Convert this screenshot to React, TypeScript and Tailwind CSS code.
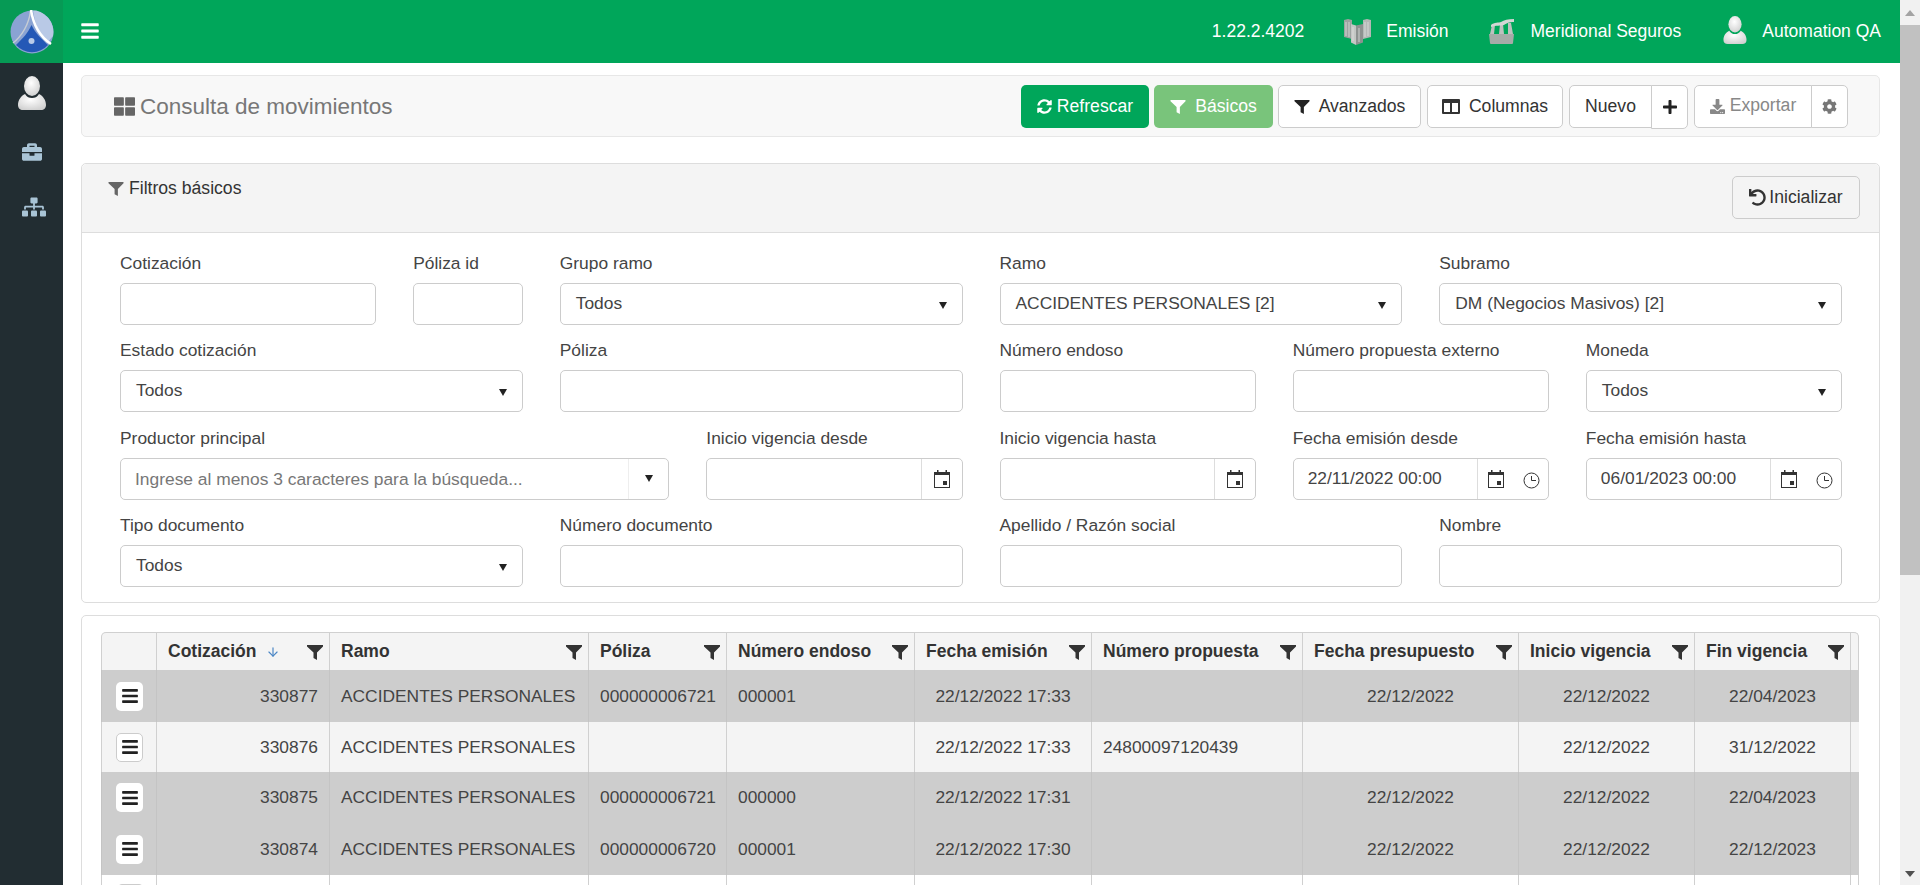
import { ArrowDown } from 'lucide-react'
import { FaBriefcase, FaSitemap, FaThLarge, FaSyncAlt, FaBars, FaUndo, FaDownload, FaCog, FaPlus } from 'react-icons/fa'

type Field = {
  label: string
  span: string
  kind?: 'text' | 'select' | 'search' | 'date' | 'datetime'
  value?: string
}

const rows: Field[][] = [
  [
    { label: 'Cotización', span: 'col-span-2' },
    { label: 'Póliza id', span: 'col-span-1' },
    { label: 'Grupo ramo', span: 'col-span-3', kind: 'select', value: 'Todos' },
    { label: 'Ramo', span: 'col-span-3', kind: 'select', value: 'ACCIDENTES PERSONALES [2]' },
    { label: 'Subramo', span: 'col-span-3', kind: 'select', value: 'DM (Negocios Masivos) [2]' },
  ],
  [
    { label: 'Estado cotización', span: 'col-span-3', kind: 'select', value: 'Todos' },
    { label: 'Póliza', span: 'col-span-3' },
    { label: 'Número endoso', span: 'col-span-2' },
    { label: 'Número propuesta externo', span: 'col-span-2' },
    { label: 'Moneda', span: 'col-span-2', kind: 'select', value: 'Todos' },
  ],
  [
    { label: 'Productor principal', span: 'col-span-4', kind: 'search' },
    { label: 'Inicio vigencia desde', span: 'col-span-2', kind: 'date' },
    { label: 'Inicio vigencia hasta', span: 'col-span-2', kind: 'date' },
    { label: 'Fecha emisión desde', span: 'col-span-2', kind: 'datetime', value: '22/11/2022 00:00' },
    { label: 'Fecha emisión hasta', span: 'col-span-2', kind: 'datetime', value: '06/01/2023 00:00' },
  ],
  [
    { label: 'Tipo documento', span: 'col-span-3', kind: 'select', value: 'Todos' },
    { label: 'Número documento', span: 'col-span-3' },
    { label: 'Apellido / Razón social', span: 'col-span-3' },
    { label: 'Nombre', span: 'col-span-3' },
  ],
]

const columns = [
  { title: 'Cotización', width: 'w-[173px]', sort: true },
  { title: 'Ramo', width: 'w-[259px]' },
  { title: 'Póliza', width: 'w-[138px]' },
  { title: 'Número endoso', width: 'w-[188px]' },
  { title: 'Fecha emisión', width: 'w-[177px]' },
  { title: 'Número propuesta', width: 'w-[211px]' },
  { title: 'Fecha presupuesto', width: 'w-[216px]' },
  { title: 'Inicio vigencia', width: 'w-[176px]' },
  { title: 'Fin vigencia', width: 'w-[156px]' },
]

const data = [
  { id: '330877', poliza: '000000006721', endoso: '000001', emision: '22/12/2022 17:33', propuesta: '', presupuesto: '22/12/2022', inicio: '22/12/2022', fin: '22/04/2023', bg: 'bg-[#cdcdcd]', h: 'h-[52px]', border: 'border-[#c4c4c4]' },
  { id: '330876', poliza: '', endoso: '', emision: '22/12/2022 17:33', propuesta: '24800097120439', presupuesto: '', inicio: '22/12/2022', fin: '31/12/2022', bg: 'bg-[#f4f4f4]', h: 'h-[50px]', border: 'border-[#d0d0d0]' },
  { id: '330875', poliza: '000000006721', endoso: '000000', emision: '22/12/2022 17:31', propuesta: '', presupuesto: '22/12/2022', inicio: '22/12/2022', fin: '22/04/2023', bg: 'bg-[#cdcdcd]', h: 'h-[51px]', border: 'border-[#c4c4c4]' },
  { id: '330874', poliza: '000000006720', endoso: '000001', emision: '22/12/2022 17:30', propuesta: '', presupuesto: '22/12/2022', inicio: '22/12/2022', fin: '22/12/2023', bg: 'bg-[#cdcdcd]', h: 'h-[52px]', border: 'border-[#c4c4c4]' },
]

function Logo() {
  return (
    <svg viewBox="0 0 44 44" className="w-[44px] h-[44px]">
      <circle cx="22" cy="22" r="21.500" fill="#8aa3d3" />
      <path d="M21 0a22 22 0 0 1 22 26L37 33C30 26 25 15 23 0z" fill="#b9c9e6" />
      <path d="M21.500 15C18 23 13 28 6 35a21.500 21.500 0 0 0 32 0C31 28 25 23 21.500 15z" fill="#2458b6" />
      <path d="M20.500 1C19 14 12 26 3 33" fill="none" stroke="#c6ccd4" strokeWidth="1.500" />
      <path d="M21 0C23 13 29 26 41 34" fill="none" stroke="#fff" strokeWidth="2.500" />
      <circle cx="21.500" cy="31" r="3" fill="#b9cbe9" />
    </svg>
  )
}

function UserFigure({ className, id }: { className: string; id: string }) {
  return (
    <svg viewBox="0 0 28 34" className={className}>
      <defs>
        <radialGradient id={id} cx="45%" cy="35%" r="70%">
          <stop offset="0%" stopColor="#ffffff" />
          <stop offset="100%" stopColor="#cfcfcf" />
        </radialGradient>
      </defs>
      <ellipse cx="14" cy="10" rx="8" ry="10" fill={`url(#${id})`} />
      <path d="M7 18c-4 2-7 6-7 11 0 3 2 5 5 5h18c3 0 5-2 5-5 0-5-3-9-7-11-2 3-4 4-7 4s-5-1-7-4z" fill={`url(#${id})`} />
    </svg>
  )
}

function BuildingsIcon() {
  return (
    <svg viewBox="0 0 27 27" className="w-[27px] h-[27px]">
      <path d="M0 2l4-1 4 1v19l-8-2z" fill="#9da3a1" />
      <path d="M19 2l4-1 4 1v17l-8 2z" fill="#b4b8b6" />
      <path d="M7 6l5 1.500V27l-5-2.500z" fill="#c3c6c4" />
      <path d="M12 7.500L19 6v18.500L12 27z" fill="#8d9290" />
      <path d="M2 4v14M5 4v15M21 4v15M24 4v14M9 9v14M15 10v14" stroke="#dfe2e0" strokeWidth="0.800" />
    </svg>
  )
}

function FactoryIcon() {
  return (
    <svg viewBox="0 0 27 26" className="w-[27px] h-[26px]">
      <path d="M1 16h25l-1 9a1 1 0 0 1-1 1H3a1 1 0 0 1-1-1z" fill="#a7aba8" />
      <path d="M2 16l2-9h3l-1 9zM11 16l1-10h3l1 10zM20 16l0-11h3l2 11z" fill="#bdc1be" />
      <path d="M3 7c3-3 8-2 10-3 3-2 7-3 13-3v3c-5 0-7 1-10 3-3 1-8 0-13 2z" fill="#d3d6d4" />
    </svg>
  )
}

function FilterIcon({ className }: { className: string }) {
  return (
    <svg viewBox="0 0 16 16" className={className}>
      <path d="M0 1h16v1.500L10 8.500V16L6.500 14V8.500L0 2.500z" fill="currentColor" />
    </svg>
  )
}

function ColumnsIcon() {
  return (
    <svg viewBox="0 0 18 15" className="w-[18px] h-[15px]">
      <path d="M1 0h16a1 1 0 0 1 1 1v13a1 1 0 0 1-1 1H1a1 1 0 0 1-1-1V1a1 1 0 0 1 1-1zm1 4v9h6V4zm8 0v9h6V4z" fill="currentColor" fillRule="evenodd" />
    </svg>
  )
}

function CalendarIcon() {
  return (
    <svg viewBox="0 0 18 18" className="w-[18px] h-[18px]">
      <path d="M4 0h1.500v2h7V0H14v2h3v16H1V2h3zm-2 5v12h14V5z" fill="#333" fillRule="evenodd" />
      <path d="M10 11h4v4h-4z" fill="#333" />
    </svg>
  )
}

function ClockIcon() {
  return (
    <svg viewBox="0 0 17 17" className="w-[17px] h-[17px]">
      <circle cx="8.500" cy="8.500" r="7.500" fill="none" stroke="#333" strokeWidth="1" />
      <path d="M8.500 4v4.500H13" fill="none" stroke="#333" strokeWidth="1" />
    </svg>
  )
}

function Caret() {
  return <span className="block w-0 h-0 border-l-[4px] border-r-[4px] border-t-[7px] border-l-transparent border-r-transparent border-t-[#222]" />
}

function Control({ field }: { field: Field }) {
  const box = 'h-[42px] w-full bg-white border border-[#ccc] rounded-[5px] flex items-center text-[17.400px] text-[#444]'
  if (field.kind === 'select') {
    return (
      <div className={`${box} pl-[15px] pr-[15px] justify-between`}>
        <span className="mt-[-2px]">{field.value}</span>
        <span className="mt-[3px]"><Caret /></span>
      </div>
    )
  }
  if (field.kind === 'search') {
    return (
      <div className={box}>
        <span className="flex-1 pl-[14px] text-[#777]">Ingrese al menos 3 caracteres para la búsqueda...</span>
        <span className="w-[40px] h-full flex items-center justify-center border-l border-[#eee]"><Caret /></span>
      </div>
    )
  }
  if (field.kind === 'date' || field.kind === 'datetime') {
    return (
      <div className={box}>
        <span className="flex-1 pl-[14px] mt-[-2px] text-[#444]">{field.value}</span>
        <span className={`h-full border-l border-[#ddd] flex items-center gap-[18px] ${field.kind === 'datetime' ? 'w-[71px] pl-[9px]' : 'w-[41px] pl-[11px]'}`}>
          <CalendarIcon />
          {field.kind === 'datetime' && <span className="mt-[3px] flex"><ClockIcon /></span>}
        </span>
      </div>
    )
  }
  return <div className={box} />
}

function TableRow({ row }: { row: (typeof data)[number] }) {
  const cell = `border-r ${row.border} px-[11px] text-[17.360px] text-[#444] whitespace-nowrap`
  return (
    <tr className={`${row.bg} ${row.h}`}>
      <td className={`${cell} border-l text-center`}>
        <span className={`ml-[1px] inline-flex items-center justify-center w-[27px] h-[29px] bg-white rounded-[5px] align-middle ${row.bg === 'bg-[#f4f4f4]' ? 'border border-[#ccc]' : ''}`}>
          <FaBars size={18} className="text-[#222]" />
        </span>
      </td>
      <td className={`${cell} text-right`}>{row.id}</td>
      <td className={cell}>ACCIDENTES PERSONALES</td>
      <td className={cell}>{row.poliza}</td>
      <td className={cell}>{row.endoso}</td>
      <td className={`${cell} text-center`}>{row.emision}</td>
      <td className={cell}>{row.propuesta}</td>
      <td className={`${cell} text-center`}>{row.presupuesto}</td>
      <td className={`${cell} text-center`}>{row.inicio}</td>
      <td className={`${cell} text-center`}>{row.fin}</td>
      <td />
    </tr>
  )
}

export default function App() {
  return (
    <div className="flex h-[885px] w-[1920px] overflow-hidden bg-white font-['Liberation_Sans',Arial,sans-serif]">
      <div className="w-[1900px] flex flex-col">
        <header className="h-[63px] shrink-0 flex bg-[#00a65a] text-white">
          <div className="w-[63px] flex items-center justify-center bg-[#069a55]">
            <Logo />
          </div>
          <div className="flex-1 flex items-center pl-[17px] pr-[19px]">
            <FaBars size={20} className="mt-[-1px]" />
            <div className="ml-auto flex items-center text-[17.500px] mt-[-1px]">
              <span>1.22.2.4202</span>
              <span className="ml-[40px] flex"><BuildingsIcon /></span>
              <span className="ml-[15px]">Emisión</span>
              <span className="ml-[39px] flex"><FactoryIcon /></span>
              <span className="ml-[16px]">Meridional Seguros</span>
              <span className="ml-[42px] flex"><UserFigure id="userTop" className="w-[24px] h-[28px] mt-[-3px]" /></span>
              <span className="ml-[15px]">Automation QA</span>
            </div>
          </div>
        </header>

        <div className="flex-1 min-h-0 flex">
          <aside className="w-[63px] shrink-0 bg-[#222d32] flex flex-col items-center">
            <UserFigure id="userSide" className="w-[28px] h-[34px] mt-[13px]" />
            <FaBriefcase size={20} className="text-[#a9c4d6] mt-[32px]" />
            <FaSitemap size={24} className="text-[#a9c4d6] mt-[33px] ml-[4px]" />
          </aside>

          <main className="flex-1 min-w-0 pl-[18px] pr-[20px] pt-[12px]">
            <section className="h-[62px] bg-[#f8f8f8] border border-[#e7e7e7] rounded-[5px] flex items-center pl-[32px] pr-[31px]">
              <FaThLarge size={21} className="text-[#666] mt-[1px]" />
              <h1 className="ml-[5px] mt-[1px] text-[22.500px] text-[#777]">Consulta de movimientos</h1>
              <div className="ml-auto flex items-center text-[17.600px] text-[#333]">
                <button className="h-[43px] w-[128px] rounded-[5px] bg-[#00a65a] text-white flex items-center justify-center gap-[5px]">
                  <FaSyncAlt size={15} />Refrescar
                </button>
                <button className="ml-[5px] h-[43px] w-[119px] rounded-[5px] bg-[#79c47b] text-white flex items-center justify-center gap-[9px]">
                  <FilterIcon className="w-[16px] h-[15px]" />Básicos
                </button>
                <button className="ml-[5px] h-[43px] w-[143px] rounded-[5px] bg-white border border-[#ccc] flex items-center justify-center gap-[9px]">
                  <FilterIcon className="w-[16px] h-[15px] text-[#222]" />Avanzados
                </button>
                <button className="ml-[6px] h-[43px] w-[136px] rounded-[5px] bg-white border border-[#ccc] flex items-center justify-center gap-[9px]">
                  <ColumnsIcon />Columnas
                </button>
                <button className="ml-[6px] h-[43px] w-[83px] rounded-l-[5px] bg-white border border-[#ccc]">Nuevo</button>
                <button className="ml-[-1px] mt-[1px] h-[44px] w-[37px] rounded-r-[5px] bg-white border border-[#ccc] flex items-center justify-center">
                  <FaPlus size={16} className="text-[#222]" />
                </button>
                <button className="ml-[6px] h-[43px] w-[118px] rounded-l-[5px] bg-white border border-[#ccc] text-[#888] flex items-center justify-center gap-[5px]">
                  <FaDownload size={15} /><span className="mt-[-2px]">Exportar</span>
                </button>
                <button className="ml-[-1px] h-[43px] w-[37px] rounded-r-[5px] bg-white border border-[#ccc] text-[#777] flex items-center justify-center">
                  <FaCog size={15} />
                </button>
              </div>
            </section>

            <section className="mt-[26px] h-[440px] border border-[#ddd] rounded-[5px]">
              <div className="h-[69px] bg-[#f4f4f4] border-b border-[#ddd] rounded-t-[5px] flex justify-between pl-[26px] pr-[19px]">
                <div className="mt-[11px] flex items-start gap-[5px] text-[17.600px] text-[#333]">
                  <FilterIcon className="w-[16px] h-[15px] text-[#666] mt-[6px]" />
                  <span>Filtros básicos</span>
                </div>
                <button className="mt-[12px] h-[43px] w-[128px] rounded-[5px] bg-[#f4f4f4] border border-[#ccc] text-[17.600px] text-[#333] flex items-center justify-center gap-[3px]">
                  <FaUndo size={17} />Inicializar
                </button>
              </div>
              <div className="pl-[38px] pr-[37px] pt-[19.600px] flex flex-col gap-[15.500px]">
                {rows.map((row, i) => (
                  <div key={i} className="grid grid-cols-12 gap-x-[37px]">
                    {row.map((field) => (
                      <div key={field.label} className={field.span}>
                        <label className="block h-[20px] leading-[20px] mb-[10px] text-[17.400px] text-[#444]">{field.label}</label>
                        <Control field={field} />
                      </div>
                    ))}
                  </div>
                ))}
              </div>
            </section>

            <section className="mt-[12px] border border-[#ddd] rounded-[5px] pl-[19px] pr-[20px] pt-[16px]">
              <table className="table-fixed w-[1758px] border-separate border-spacing-0">
                <colgroup>
                  <col className="w-[56px]" />
                  {columns.map((c) => <col key={c.title} className={c.width} />)}
                  <col />
                </colgroup>
                <thead>
                  <tr className="h-[38px] bg-[#f4f4f4]">
                    <th className="border-l border-t border-r border-[#d0d0d0] rounded-tl-[5px]" />
                    {columns.map((c) => (
                      <th key={c.title} className="border-t border-r border-[#d0d0d0] pl-[11px] pr-[6px] text-left text-[17.500px] font-bold text-[#333]">
                        <div className="flex items-center whitespace-nowrap">
                          <span>{c.title}</span>
                          {c.sort && <ArrowDown size={14} strokeWidth={2} className="ml-[10px] text-[#4a86c5]" />}
                          <FilterIcon className="ml-auto w-[16px] h-[16px] text-[#333]" />
                        </div>
                      </th>
                    ))}
                    <th className="border-t border-r border-[#d0d0d0] rounded-tr-[5px]" />
                  </tr>
                </thead>
                <tbody>
                  {data.map((row) => <TableRow key={row.id} row={row} />)}
                  <tr className="h-[51px]">
                    {Array.from({ length: 11 }).map((_, i) => (
                      <td key={i} className={`border-r border-[#d0d0d0] align-top ${i === 0 ? 'border-l' : ''}`}>
                        {i === 0 && <span className="mt-[9px] ml-[15px] block w-[27px] h-[29px] border border-[#ccc] rounded-[5px]" />}
                      </td>
                    ))}
                  </tr>
                </tbody>
              </table>
            </section>
          </main>
        </div>
      </div>

      <div className="w-[20px] shrink-0 bg-[#f1f1f1] flex flex-col items-center">
        <div className="h-[25px] flex items-center justify-center">
          <span className="w-0 h-0 border-l-[5px] border-r-[5px] border-b-[6px] border-l-transparent border-r-transparent border-b-[#a3a3a3]" />
        </div>
        <div className="w-full h-[550px] bg-[#c1c1c1]" />
        <div className="mt-auto h-[22px] flex items-center justify-center">
          <span className="w-0 h-0 border-l-[5px] border-r-[5px] border-t-[6px] border-l-transparent border-r-transparent border-t-[#505050]" />
        </div>
      </div>
    </div>
  )
}
